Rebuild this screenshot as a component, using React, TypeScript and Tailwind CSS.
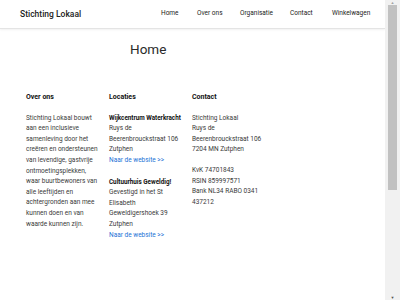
import React from "react";

const NAV = ["Home", "Over ons", "Organisatie", "Contact", "Winkelwagen"];

function Link({ children }: { children: React.ReactNode }) {
  return <a href="#" className="text-[#1e73d6]">{children}</a>;
}

// the browser's scrollbar as it appears in the screenshot
function FakeScrollbar() {
  return (
    <div className="fixed top-0 right-0 w-[15px] h-[300px] bg-[#f1f1f1] flex flex-col items-center">
      <div className="h-[5px] flex items-center text-[4px] leading-none text-[#a3a3a3]">▲</div>
      <div className="w-[9px] h-[185px] bg-[#c1c1c1]" />
      <div className="flex-1" />
      <div className="h-[5px] flex items-center text-[4px] leading-none text-[#505050]">▼</div>
    </div>
  );
}

export default function App() {
  return (
    <div className="min-h-[470px] pr-[15px] bg-white text-[#3a3a3a] font-['Roboto',sans-serif]">
      <header className="h-[29px] flex items-center border-b border-[#e4e4e4] shadow-[0_1px_2px_rgba(0,0,0,0.06)]">
        <div className="pl-[20px] text-[8.5px] font-medium text-[#222] w-[161px]">Stichting Lokaal</div>
        <nav className="flex text-[6.5px] text-[#222]">
          <span className="w-[36px]">{NAV[0]}</span>
          <span className="w-[43px]">{NAV[1]}</span>
          <span className="w-[50px]">{NAV[2]}</span>
          <span className="w-[42px]">{NAV[3]}</span>
          <span>{NAV[4]}</span>
        </nav>
      </header>

      <main className="pl-[26px]">
        <h1 className="pl-[104px] pt-[10px] text-[13.5px] leading-[20px] text-[#2a2a2a]">Home</h1>

        <div className="mt-[33px] grid grid-cols-[83px_83px_83px] text-[6.5px] leading-[10.6px]">
          <section className="pr-[11px]">
            <h2 className="font-bold text-[7px] text-[#111] mb-[10px]">Over ons</h2>
            <p>
              Stichting Lokaal bouwt aan een inclusieve samenleving door het creëren en ondersteunen van
              levendige, gastvrije ontmoetingsplekken, waar buurtbewoners van alle leeftijden en
              achtergronden aan mee kunnen doen en van waarde kunnen zijn.
            </p>
          </section>

          <section>
            <h2 className="font-bold text-[7px] text-[#111] mb-[10px]">Locaties</h2>
            <p className="font-bold text-[6.3px] text-[#111]">Wijkcentrum Waterkracht</p>
            <p>Ruys de<br />Beerenbrouckstraat 106<br />Zutphen</p>
            <p><Link>Naar de website &gt;&gt;</Link></p>
            <p className="font-bold text-[6.3px] text-[#111] mt-[11px]">Cultuurhuis Geweldig!</p>
            <p>Gevestigd in het St<br />Elisabeth<br />Geweldigershoek 39<br />Zutphen</p>
            <p><Link>Naar de website &gt;&gt;</Link></p>
          </section>

          <section>
            <h2 className="font-bold text-[7px] text-[#111] mb-[10px]">Contact</h2>
            <p>Stichting Lokaal<br />Ruys de<br />Beerenbrouckstraat 106<br />7204 MN Zutphen</p>
            <p className="mt-[10px]">KvK 74701843<br />RSIN 859997571<br />Bank NL34 RABO 0341<br />437212</p>
          </section>
        </div>
      </main>
      <FakeScrollbar />
    </div>
  );
}
